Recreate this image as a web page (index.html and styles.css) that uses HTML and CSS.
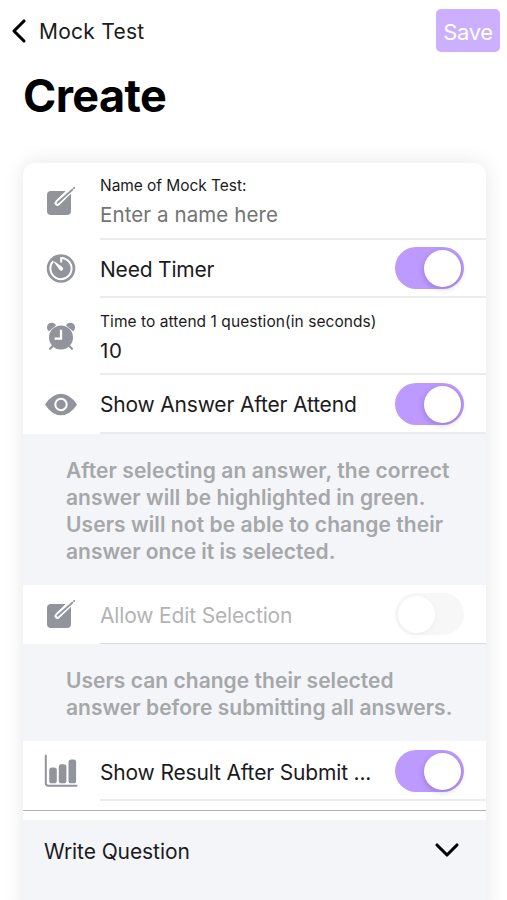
FILE: index.html
```html
<!DOCTYPE html>
<html lang="en">
<head>
<meta charset="utf-8">
<meta name="viewport" content="width=device-width, initial-scale=1">
<title>Mock Test</title>
<link rel="stylesheet" href="styles.css">
</head>
<body>
<svg width="0" height="0" class="defs">
  <symbol id="create" viewBox="0 0 32 32">
    <rect x="2" y="5" width="24" height="24" rx="4"/>
    <path class="gap" d="M12.3 17L26.5 3.2"/>
    <path class="groove" d="M12.3 17.2L24.5 5.4"/>
    <path class="pen" d="M12.6 16.8L27.4 3.6M29 2.1L29.3 1.8"/>
  </symbol>
</svg>
<header class="topbar">
  <a class="back"><svg class="chevron" viewBox="0 0 16 26"><path d="M13 3L3 13 13 23"/></svg><span>Mock Test</span></a>
  <button class="save">Save</button>
</header>
<h1>Create</h1>
<main class="card">
  <div class="row tall">
    <svg class="icon"><use href="#create"/></svg>
    <div class="body stacked"><label class="label-name">Name of Mock Test:</label><span class="value placeholder">Enter a name here</span></div>
  </div>
  <div class="row timer">
    <svg class="icon" viewBox="0 0 32 32"><circle cx="16" cy="15.5" r="14.3"/><path class="cut" d="M16.2 9.4V4.9A10.6 10.6 0 1 1 8.2 8.3"/><path class="white" d="M8.9 8.9Q9.4 8.4 9.9 8.8L17.3 14Q19 15.6 17.6 17 16.1 18.4 14.5 16.7Z"/></svg>
    <div class="body"><span class="need">Need Timer</span><i class="toggle on"></i></div>
  </div>
  <div class="row tall">
    <svg class="icon" viewBox="0 0 32 32"><circle cx="6.7" cy="6.4" r="4.7"/><circle cx="25.3" cy="6.4" r="4.7"/><path class="ring" d="M3.2 12.3L13 4M28.8 12.3L19 4"/><circle cx="16" cy="16.5" r="12"/><path class="legs" d="M7.8 25L5 27.8M24.2 25L27 27.8"/><path class="hands" d="M16 8.8V17.6H9.6"/></svg>
    <div class="body stacked"><label class="label-time">Time to attend 1 question(in seconds)</label><span class="value ten">10</span></div>
  </div>
  <div class="row">
    <svg class="icon eye" viewBox="0 0 34 32"><path d="M1 15.5Q8 4.7 17 4.7T33 15.5Q26 26.3 17 26.3T1 15.5Z"/><circle class="cut" cx="17" cy="15.5" r="5.7"/></svg>
    <div class="body"><span class="show-answer">Show Answer After Attend</span><i class="toggle on"></i></div>
  </div>
  <p class="note first"><span class="n1">After selecting an answer, the correct</span><br><span class="n2">answer will be highlighted in green.</span><br><span class="n1">Users will not be able to change their</span><br><span>answer once it is selected.</span></p>
  <div class="row disabled">
    <svg class="icon"><use href="#create"/></svg>
    <div class="body"><span class="allow">Allow Edit Selection</span><i class="toggle"></i></div>
  </div>
  <p class="note second"><span class="n2">Users can change their selected</span><br><span class="n2">answer before submitting all answers.</span></p>
  <div class="row result">
    <svg class="icon stats" viewBox="0 0 34 34"><path class="axis" d="M1.8 1.5V29Q1.8 31.8 4.3 31.8H32.5"/><rect x="5.2" y="13.5" width="7.6" height="15.8" rx="2.6"/><rect x="14.8" y="10.3" width="7.6" height="19" rx="2.6"/><rect x="24.5" y="5.5" width="7.6" height="23.8" rx="2.6"/></svg>
    <div class="body"><span class="show-result">Show Result After Submit ...</span><i class="toggle on"></i></div>
  </div>
  <div class="divider"></div>
  <section class="question"><span>Write Question</span><svg class="down" viewBox="0 0 26 16"><path d="M3 3L13 13 23 3"/></svg></section>
</main>
</body>
</html>
```
FILE: styles.css
```css
* { box-sizing: border-box; }
body {
  margin: 0;
  height: 900px;
  overflow: hidden;
  background: #fff;
  color: #1b1b1d;
  font-family: Inter, "Liberation Sans", sans-serif;
  font-size: 21px;
}
.defs { position: absolute; }
.topbar {
  display: flex;
  justify-content: space-between;
  align-items: flex-start;
  height: 62px;
  padding: 9px 7px 0 11px;
}
.back { display: flex; align-items: center; gap: 12px; height: 44px; letter-spacing: 0.25px; }
.chevron { width: 16px; height: 26px; }
.chevron path, .down path { fill: none; stroke: #000; stroke-width: 3.1; stroke-linecap: round; stroke-linejoin: round; }
.save {
  width: 64px;
  height: 43px;
  padding: 2px 0 0;
  border: 0;
  border-radius: 5px;
  background: #ccb0ff;
  color: #fff;
  font: inherit;
  font-size: 22px;
  letter-spacing: -0.3px;
}
h1 {
  margin: 0 0 0 23px;
  height: 101px;
  padding-top: 6px;
  font-size: 45px;
  line-height: 56px;
  font-weight: 700;
  letter-spacing: -0.6px;
  color: #000;
}
.card {
  width: 463px;
  height: 760px;
  margin-left: 23px;
  border-radius: 12px;
  background: #fff;
  box-shadow: 0 0 20px rgba(0, 0, 0, 0.1);
}
.row { display: flex; height: 59px; padding-left: 22px; }
.row.tall { height: 77px; }
.row.timer { height: 58px; }
.row.result { height: 60px; }
.icon { flex: none; align-self: center; width: 32px; height: 32px; margin-right: 23px; fill: #92949c; }
.eye, .stats { width: 34px; height: 34px; margin-left: -1px; margin-right: 22px; }
.cut { fill: none; stroke: #fff; stroke-width: 2; }
.hands { fill: none; stroke: #fff; stroke-width: 2.3; }
.white { fill: #fff; }
.ring { fill: none; stroke: #fff; stroke-width: 2; }
.legs { stroke: #92949c; stroke-width: 2.2; stroke-linecap: round; }
.axis { fill: none; stroke: #92949c; stroke-width: 2; stroke-linecap: round; }
.gap { stroke: #fff; stroke-width: 5.4; }
.groove { stroke: #fff; stroke-width: 5.4; stroke-linecap: round; }
.pen { stroke: #92949c; stroke-width: 1.9; stroke-linecap: round; }
.body {
  flex: 1;
  display: flex;
  align-items: center;
  justify-content: space-between;
  padding-right: 22px;
  border-bottom: 2px solid #ececec;
  white-space: nowrap;
}
.row .body:not(.stacked) > span { padding-top: 2px; }
.need { letter-spacing: -0.2px; }
.show-answer { letter-spacing: -0.18px; }
.allow { letter-spacing: -0.15px; }
.show-result { letter-spacing: -0.16px; }
.result .body { padding-top: 2px; }
.stacked { flex-direction: column; align-items: flex-start; justify-content: flex-start; padding-top: 13px; }
.stacked label { font-size: 15.5px; line-height: 20px; }
.label-name { letter-spacing: -0.05px; }
.label-time { padding-top: 1px; margin-bottom: -1px; letter-spacing: 0.06px; }
.value { margin-top: 5px; font-size: 20.5px; line-height: 28px; }
.placeholder { color: #737373; letter-spacing: 0.1px; }
.ten { padding-top: 1px; letter-spacing: 0.6px; }
.toggle { width: 69px; height: 42px; padding: 3px; border-radius: 21px; background: #f7f7f7; }
.toggle::before { content: ""; display: block; width: 37px; height: 37px; border-radius: 50%; background: #fff; box-shadow: 0 2px 6px rgba(0, 0, 0, 0.04); }
.toggle.on { background: #bc9aff; padding-left: 29px; }
.toggle.on::before { box-shadow: 0 2px 6px rgba(0, 0, 0, 0.2); }
.disabled .body { color: #b3b3b3; border-color: #d9dbdf; border-bottom-width: 1px; }
.note {
  margin: 0;
  padding: 23px 0 0 43px;
  background: #f3f5f9;
  color: #a6a7a9;
  font-weight: 600;
  line-height: 27px;
  white-space: nowrap;
}
.n1 { letter-spacing: 0.08px; }
.n2 { letter-spacing: 0.03px; }
.first { height: 151px; }
.second { height: 97px; }
.divider { height: 19px; padding-top: 9px; }
.divider::before { content: ""; display: block; height: 1px; background: #b5b5b0; }
.question {
  display: flex;
  justify-content: space-between;
  height: 90px;
  padding: 17px 26px 0 21px;
  background: #f3f5f9;
  line-height: 29px;
  letter-spacing: -0.08px;
}
.down { width: 26px; height: 16px; margin-top: 5px; }
```
